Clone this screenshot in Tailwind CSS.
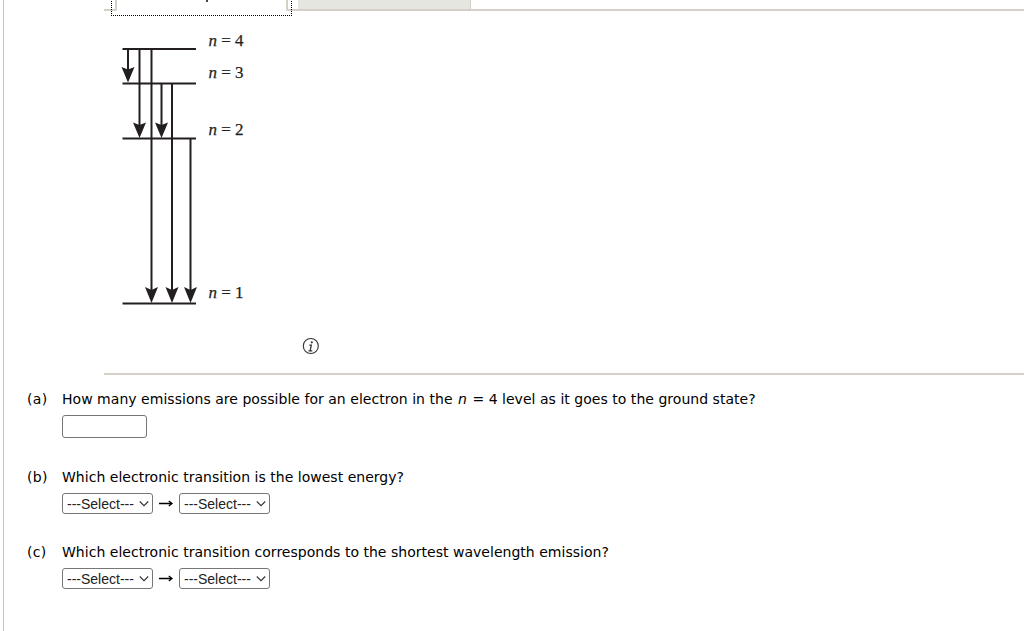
<!DOCTYPE html>
<html lang="en">
  <head>
    <meta charset="UTF-8" />
    <meta name="viewport" content="width=device-width, initial-scale=1.0" />
    <title>Electronic Transitions</title>
    <script src="https://cdn.jsdelivr.net/npm/@tailwindcss/browser@4"></script>
  </head>
  <body class="bg-white overflow-hidden">
    <main
      class="ml-[3px] h-[631px] border-l border-[#c4c4c4] text-black text-[14px] leading-[18px] font-['Verdana','DejaVu_Sans',sans-serif]"
    >
      <section class="ml-[100px] h-[375px] border-b-2 border-[#d4d0c8]">
        <!-- bottom edge of the tab strip -->
        <div class="relative flex h-[11px]">
          <div class="w-[13px] border-b-2 border-r-2 border-[#d4d0c8] rounded-br-[2px]"></div>
          <div class="w-[169px]"></div>
          <div class="flex-1 pl-[10px] border-b-2 border-l-2 border-[#d4d0c8] rounded-bl-[2px]">
            <div class="w-[173px] h-full bg-[#e6e6e0] border-r border-[#d4d0c8]"></div>
          </div>
          <div class="absolute left-[7px] -top-[4px] w-[181px] h-[20px] border border-dotted border-black"></div>
          <div class="absolute left-[102px] top-0 w-[2px] h-[2px] bg-[#444]"></div>
        </div>

        <svg class="block" width="200" height="309" viewBox="104 11 200 309">
          <g stroke="#231f20" stroke-width="2">
            <path d="M122.5 49H196M122.5 83.500H196M122.5 138.500H196M122.5 303.500H196" />
            <path d="M128 49V72M139.500 49V128M151.500 49V292M161.500 83V128M172 83V292M190.500 138V292" />
          </g>
          <g fill="#231f20">
            <path d="M128 82.500L121.500 67L128 69.500L134.500 67Z" />
            <path d="M139.500 138L133 122.500L139.500 125L146 122.500Z" />
            <path d="M161.500 138L155 122.500L161.500 125L168 122.500Z" />
            <path d="M151.500 303L145 287L151.500 290L158 287Z" />
            <path d="M172 303L165.500 287L172 290L178.500 287Z" />
            <path d="M190.500 303L184 287L190.500 290L197 287Z" />
          </g>
          <g class="font-['Liberation_Serif',serif] text-[17px]" fill="#231f20" stroke="#231f20" stroke-width="0.250">
            <text x="208.500" y="46" textLength="35"><tspan font-style="italic">n</tspan> = 4</text>
            <text x="208.500" y="78" textLength="35"><tspan font-style="italic">n</tspan> = 3</text>
            <text x="208.500" y="135" textLength="35"><tspan font-style="italic">n</tspan> = 2</text>
            <text x="208.500" y="298" textLength="35"><tspan font-style="italic">n</tspan> = 1</text>
          </g>
        </svg>

        <svg class="ml-[198px] mt-[17px]" width="18" height="18" viewBox="0 0 18 18">
          <circle cx="8.800" cy="9" r="7.500" fill="none" stroke="#333" stroke-width="1.100" />
          <circle cx="9.800" cy="5.300" r="1.100" fill="#333" />
          <path d="M7.300 8.100H9.300L8.200 13.600M6.500 13.800H10.300" fill="none" stroke="#333" stroke-width="1.300" />
        </svg>
      </section>

      <ol class="pl-[23px]">
        <li class="flex h-[78px] pt-[15px]">
          <span class="w-[35px] tracking-[0.3px]">(a)</span>
          <div>
            <p class="whitespace-nowrap tracking-[0.03px]">How many emissions are possible for an electron in the <i class="ml-px mr-px">n</i> = 4 level as it goes to the ground state?</p>
            <input type="text" class="block mt-[7px] w-[85px] h-[23px] border border-[#767676] rounded-[3px] bg-white" />
          </div>
        </li>
        <li class="flex h-[75px] pt-[15px]">
          <span class="w-[35px] tracking-[0.3px]">(b)</span>
          <div>
            <p class="whitespace-nowrap tracking-[0.020px]">Which electronic transition is the lowest energy?</p>
            <div class="flex mt-[7px]">
              <button class="flex items-center w-[91px] h-[21px] pl-1 border border-[#767676] rounded-[3px] text-[#222] text-[14px] font-['Liberation_Sans',sans-serif]">
                ---Select---
                <svg class="ml-[5px]" width="10" height="7" viewBox="0 0 10 7" fill="none" stroke="#333" stroke-width="1.100"><path d="M0.800 1.500L5 5.700L9.200 1.500" /></svg>
              </button>
              <svg class="mx-[5px]" width="16" height="21" viewBox="0 0 16 21" fill="none" stroke="#000" stroke-width="1.300"><path d="M1 10.500H14M10.800 8L14 10.500L10.800 13" /></svg>
              <button class="flex items-center w-[91px] h-[21px] pl-1 border border-[#767676] rounded-[3px] text-[#222] text-[14px] font-['Liberation_Sans',sans-serif]">
                ---Select---
                <svg class="ml-[5px]" width="10" height="7" viewBox="0 0 10 7" fill="none" stroke="#333" stroke-width="1.100"><path d="M0.800 1.500L5 5.700L9.200 1.500" /></svg>
              </button>
            </div>
          </div>
        </li>
        <li class="flex h-[75px] pt-[15px]">
          <span class="w-[35px] tracking-[0.3px]">(c)</span>
          <div>
            <p class="whitespace-nowrap tracking-[0.020px]">Which electronic transition corresponds to the shortest wavelength emission?</p>
            <div class="flex mt-[7px]">
              <button class="flex items-center w-[91px] h-[21px] pl-1 border border-[#767676] rounded-[3px] text-[#222] text-[14px] font-['Liberation_Sans',sans-serif]">
                ---Select---
                <svg class="ml-[5px]" width="10" height="7" viewBox="0 0 10 7" fill="none" stroke="#333" stroke-width="1.100"><path d="M0.800 1.500L5 5.700L9.200 1.500" /></svg>
              </button>
              <svg class="mx-[5px]" width="16" height="21" viewBox="0 0 16 21" fill="none" stroke="#000" stroke-width="1.300"><path d="M1 10.500H14M10.800 8L14 10.500L10.800 13" /></svg>
              <button class="flex items-center w-[91px] h-[21px] pl-1 border border-[#767676] rounded-[3px] text-[#222] text-[14px] font-['Liberation_Sans',sans-serif]">
                ---Select---
                <svg class="ml-[5px]" width="10" height="7" viewBox="0 0 10 7" fill="none" stroke="#333" stroke-width="1.100"><path d="M0.800 1.500L5 5.700L9.200 1.500" /></svg>
              </button>
            </div>
          </div>
        </li>
      </ol>
    </main>
  </body>
</html>
